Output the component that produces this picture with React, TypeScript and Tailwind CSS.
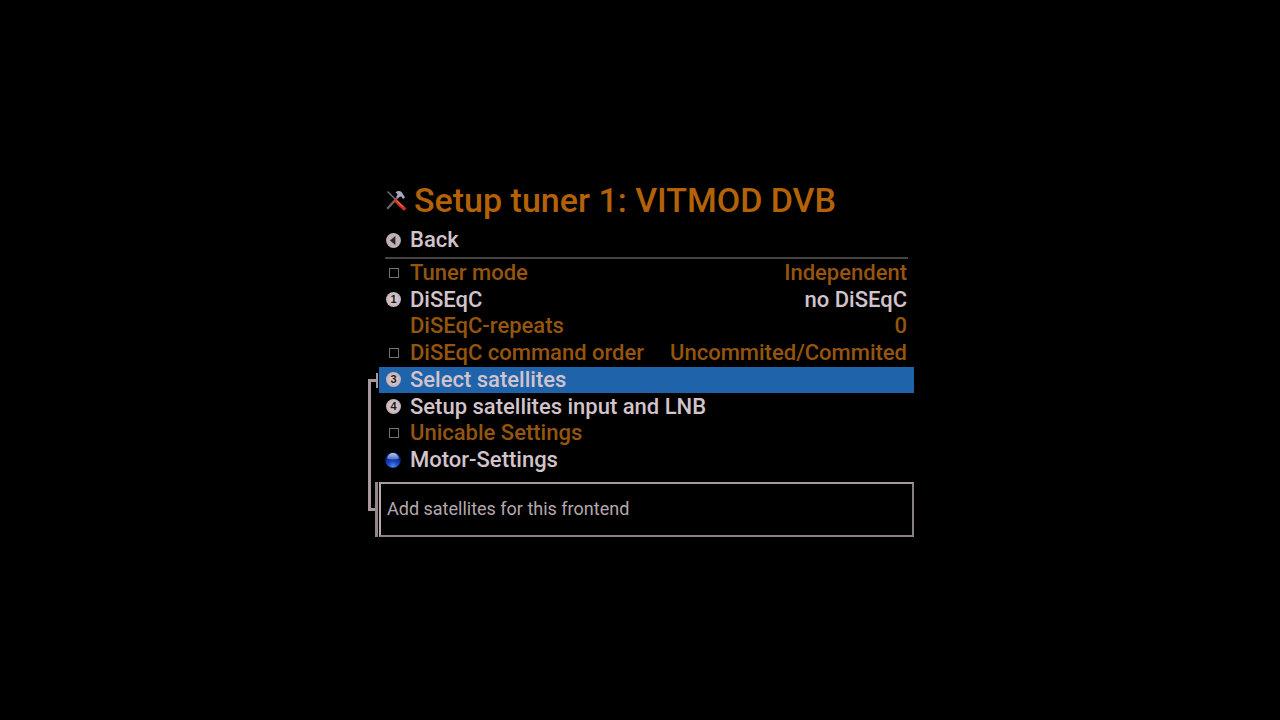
import clsx from "clsx";
import type { ReactNode } from "react";

type MenuItem = {
  label: string;
  value?: string;
  icon?: ReactNode;
  disabled?: boolean;
  selected?: boolean;
};

const items: MenuItem[] = [
  { label: "Tuner mode", value: "Independent", icon: <BoxIcon />, disabled: true },
  { label: "DiSEqC", value: "no DiSEqC", icon: <NumberIcon value={1} /> },
  { label: "DiSEqC-repeats", value: "0", disabled: true },
  {
    label: "DiSEqC command order",
    value: "Uncommited/Commited",
    icon: <BoxIcon />,
    disabled: true,
  },
  { label: "Select satellites", icon: <NumberIcon value={3} />, selected: true },
  { label: "Setup satellites input and LNB", icon: <NumberIcon value={4} /> },
  { label: "Unicable Settings", icon: <BoxIcon />, disabled: true },
  { label: "Motor-Settings", icon: <BlueIcon /> },
];

export default function App() {
  return (
    <div className="flex min-h-screen items-center justify-center bg-black font-['Roboto',sans-serif] text-[22px] leading-[26px] font-medium text-[#d3c3ca]">
      <main className="w-full max-w-[548px] pl-[13px]">
        <header className="flex h-8 items-center gap-2 pl-[7px]">
          <ToolsIcon />
          <h1 className="text-[34px] leading-8 whitespace-nowrap text-[#b36208]">
            Setup tuner 1: VITMOD DVB
          </h1>
        </header>
        <button
          type="button"
          className="mt-[11px] flex h-[27px] w-full items-center pl-[7px] text-left"
        >
          <span className="flex w-6 shrink-0">
            <BackIcon />
          </span>
          Back
        </button>
        <hr className="mt-[3px] mr-[6px] ml-[6px] border-t-2 border-[#474344]" />

        <div className="relative mt-px">
          <Connector />
          <ul className="grid h-[214px] auto-rows-fr">
            {items.map((item) => (
              <MenuRow key={item.label} item={item} />
            ))}
          </ul>
          <p className="mt-2 flex h-[55px] items-center border-2 border-t-[#a8999e] border-r-[#897e83] border-b-[#8a8386] border-l-[#b9a8ae] pl-[6px] text-[18px] leading-6 font-normal text-[#b5a8ad]">
            Add satellites for this frontend
          </p>
        </div>
      </main>
    </div>
  );
}

function MenuRow({ item }: { item: MenuItem }) {
  return (
    <li className="flex">
      <button
        type="button"
        disabled={item.disabled}
        className={clsx(
          "flex w-full items-center px-[7px] text-left whitespace-nowrap",
          item.selected && "bg-[#1f63aa]",
          item.disabled && "text-[#96550d]",
        )}
      >
        <span className="flex w-6 shrink-0">{item.icon}</span>
        <span>{item.label}</span>
        {item.value && <span className="ml-auto">{item.value}</span>}
      </button>
    </li>
  );
}

// bracket that ties the selected row to the hint box
function Connector() {
  return (
    <div aria-hidden="true" className="absolute inset-y-0 -left-[11px] w-[11px]">
      <div className="absolute top-[119px] bottom-[26px] left-0 w-2 border-y-[3px] border-l-[3px] border-[#a8989e]" />
      <div className="absolute top-[113px] left-2 h-[15px] w-0.5 bg-[#a8989e]" />
      <div className="absolute bottom-0 left-[7px] h-[55px] w-[3px] bg-[#94858b]" />
    </div>
  );
}

function BoxIcon() {
  return <span className="ml-[3px] size-[10px] border border-[#77706f]" />;
}

function NumberIcon({ value }: { value: number }) {
  return (
    <span className="flex size-[15px] items-center justify-center rounded-full bg-radial from-[#e0d2d8] to-[#b5a5ab] font-['Liberation_Sans',sans-serif] text-[11px] leading-[15px] font-bold text-[#1c1819]">
      {value}
    </span>
  );
}

function BackIcon() {
  return (
    <svg viewBox="0 0 15 15" className="size-[15px]">
      <circle cx="7.5" cy="7.5" r="7.4" fill="#bfb1b6" />
      <path d="M9.4 3v9L4 7.5z" fill="#2a2526" />
    </svg>
  );
}

function BlueIcon() {
  return (
    <svg viewBox="0 0 16 16" className="-ml-px size-4">
      <defs>
        <radialGradient id="ball" cx="0.5" cy="0.92" r="0.75">
          <stop offset="0" stopColor="#4f8df5" />
          <stop offset="0.45" stopColor="#1a46c4" />
          <stop offset="1" stopColor="#0a1a6b" />
        </radialGradient>
        <linearGradient id="shine" x1="0" y1="0" x2="0" y2="1">
          <stop offset="0" stopColor="#b9c9ea" />
          <stop offset="1" stopColor="#4a6cc0" />
        </linearGradient>
      </defs>
      <circle cx="8" cy="8" r="7.8" fill="url(#ball)" />
      <path d="M2 6.6C2.6 3 5 1 8 1s5.400 2 6 5.600C11 7.800 5 7.800 2 6.600z" fill="url(#shine)" />
    </svg>
  );
}

function ToolsIcon() {
  return (
    <svg viewBox="0 0 20 22" className="h-[22px] w-5 shrink-0">
      <path d="M1.200 19.800L12.500 7.600" stroke="#6f6b6d" strokeWidth="2.200" />
      <path d="M1.500 2.500L11 12" stroke="#77777c" strokeWidth="1.300" />
      <path d="M10 12l8 7.500" stroke="#cf3322" strokeWidth="3.600" strokeLinecap="round" />
      <path d="M10.500 11.700l6.500 6" stroke="#ee7561" strokeWidth="1" />
      <path
        d="M9.500 3.500c2-2 4.500-1.900 6.200-.3l1.500 2.300 1.800 2.800-1.900 1.700-1.700-2.500-2.200.5-1.500 1.300-1.500-1.500 1.300-1.900-.5-1.500z"
        fill="#a7a9bd"
      />
    </svg>
  );
}
